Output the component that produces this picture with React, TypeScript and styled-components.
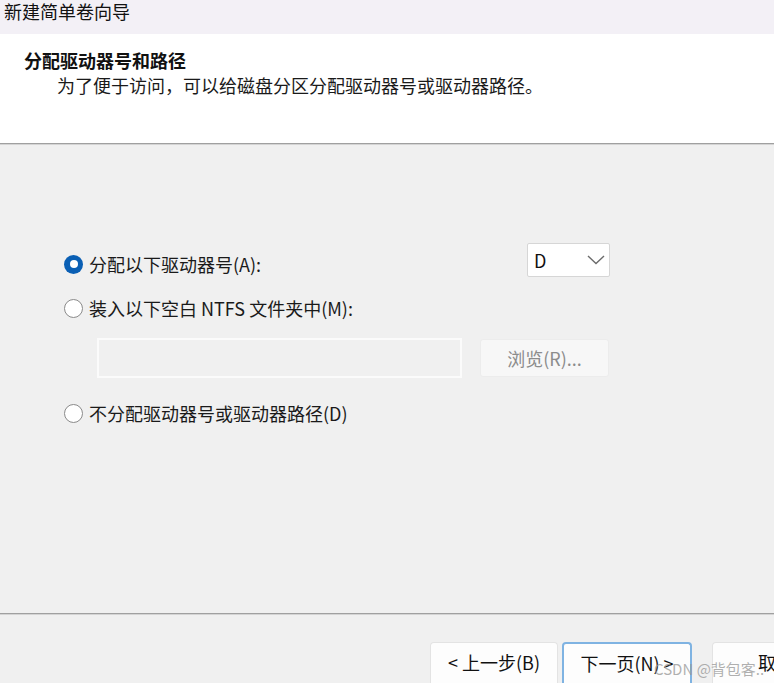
import styled, { createGlobalStyle } from "styled-components";

const GlobalStyle = createGlobalStyle`
  html, body {
    margin: 0;
    padding: 0;
    height: 100%;
    overflow: hidden;
  }
  body {
    font-family: "Noto Sans CJK SC", "Noto Sans", sans-serif;
    color: #1a1a1a;
  }
  #root {
    height: 100%;
  }
`;

const Window = styled.div`
  position: relative;
  height: 100vh;
  display: flex;
  flex-direction: column;
  overflow: hidden;
  background: #f0f0f0;
`;

const TitleBar = styled.div`
  height: 34px;
  flex-shrink: 0;
  background: #f3f0f6;
  padding-left: 4px;
  font-size: 18px;
  line-height: 22px;
  color: #111;
`;

const Header = styled.div`
  height: 109px;
  flex-shrink: 0;
  box-sizing: border-box;
  background: #ffffff;
  padding: 14px 0 0 24px;
`;

const HeaderTitle = styled.div`
  font-size: 18px;
  font-weight: bold;
  line-height: 25px;
  color: #111;
`;

const HeaderDesc = styled.div`
  font-size: 18px;
  line-height: 25px;
  padding-left: 33px;
  color: #1a1a1a;
`;

const Separator = styled.div`
  height: 0;
  flex-shrink: 0;
  border-top: 1px solid #a0a0a0;
  border-bottom: 1px solid #d4d4d4;
`;

const Body = styled.div`
  flex: 1;
  padding: 102px 0 0 64px;
`;

const Options = styled.div`
  width: 546px;
  display: flex;
  flex-direction: column;
`;

const OptionRow = styled.label<{ $gap?: number }>`
  display: flex;
  align-items: center;
  height: 34px;
  margin-top: ${(p) => p.$gap ?? 0}px;
  font-size: 18px;
  color: #1a1a1a;
`;

const Radio = styled.span<{ $checked?: boolean }>`
  width: 19px;
  height: 19px;
  box-sizing: border-box;
  border-radius: 50%;
  margin-right: 6px;
  flex-shrink: 0;
  display: flex;
  align-items: center;
  justify-content: center;
  background: ${(p) => (p.$checked ? "#0a5fb4" : "#ffffff")};
  border: ${(p) => (p.$checked ? "none" : "1px solid #8a8a8a")};

  &::after {
    content: "";
    display: ${(p) => (p.$checked ? "block" : "none")};
    width: 8px;
    height: 8px;
    border-radius: 50%;
    background: #ffffff;
  }
`;

const Select = styled.div`
  margin: -8px 0 0 auto;
  width: 83px;
  height: 34px;
  box-sizing: border-box;
  background: #ffffff;
  border: 1px solid #d6d6d6;
  border-radius: 2px;
  display: flex;
  align-items: center;
  justify-content: space-between;
  padding: 0 4px 0 6px;
  font-size: 18px;
  color: #111;
`;

const PathRow = styled.div`
  display: flex;
  align-items: center;
  margin-top: 13px;
  padding-left: 33px;
`;

const PathInput = styled.div`
  width: 365px;
  height: 40px;
  box-sizing: border-box;
  border: 2px solid #fbfbfb;
  background: #f0f0f0;
`;

const BrowseButton = styled.button`
  margin-left: 18px;
  width: 129px;
  height: 38px;
  border: 1px solid #ececec;
  border-radius: 3px;
  background: #f7f7f7;
  font-family: inherit;
  font-size: 18px;
  color: #8c8c8c;
`;

const Footer = styled.div`
  flex-shrink: 0;
  height: 68px;
  display: flex;
  align-items: flex-end;
  padding-left: 430px;
  gap: 4px;
`;

const FooterButton = styled.button<{ $primary?: boolean; $space?: number }>`
  flex-shrink: 0;
  width: ${(p) => (p.$primary ? 130 : 128)}px;
  height: 41px;
  margin-left: ${(p) => p.$space ?? 0}px;
  box-sizing: border-box;
  border: ${(p) => (p.$primary ? "2px solid #7fb3e2" : "1px solid #e3e3e3")};
  border-bottom: none;
  border-radius: 4px 4px 0 0;
  background: #fdfdfd;
  font-family: inherit;
  font-size: 18px;
  color: #111;
  padding: 0 0 2px;
  white-space: nowrap;
`;

const Watermark = styled.div`
  position: absolute;
  left: 654px;
  bottom: 4px;
  font-size: 15px;
  color: rgba(150, 150, 150, 0.75);
  white-space: nowrap;
  pointer-events: none;
`;

const Chevron = () => (
  <svg width="18" height="10" viewBox="0 0 18 10">
    <path d="M1 1 L9 8.5 L17 1" fill="none" stroke="#6b6b6b" strokeWidth="1.4" />
  </svg>
);

const App = () => {
  return (
    <>
      <GlobalStyle />
      <Window>
        <TitleBar>新建简单卷向导</TitleBar>
        <Header>
          <HeaderTitle>分配驱动器号和路径</HeaderTitle>
          <HeaderDesc>为了便于访问，可以给磁盘分区分配驱动器号或驱动器路径。</HeaderDesc>
        </Header>
        <Separator />
        <Body>
          <Options>
            <OptionRow>
              <Radio $checked />
              分配以下驱动器号(A):
              <Select>
                D
                <Chevron />
              </Select>
            </OptionRow>
            <OptionRow $gap={10}>
              <Radio />
              装入以下空白 NTFS 文件夹中(M):
            </OptionRow>
            <PathRow>
              <PathInput />
              <BrowseButton>浏览(R)...</BrowseButton>
            </PathRow>
            <OptionRow $gap={18}>
              <Radio />
              不分配驱动器号或驱动器路径(D)
            </OptionRow>
          </Options>
        </Body>
        <Separator />
        <Footer>
          <FooterButton>&lt; 上一步(B)</FooterButton>
          <FooterButton $primary>下一页(N) &gt;</FooterButton>
          <FooterButton $space={16}>取消</FooterButton>
        </Footer>
        <Watermark>CSDN @背包客..</Watermark>
      </Window>
    </>
  );
};

export default App;
